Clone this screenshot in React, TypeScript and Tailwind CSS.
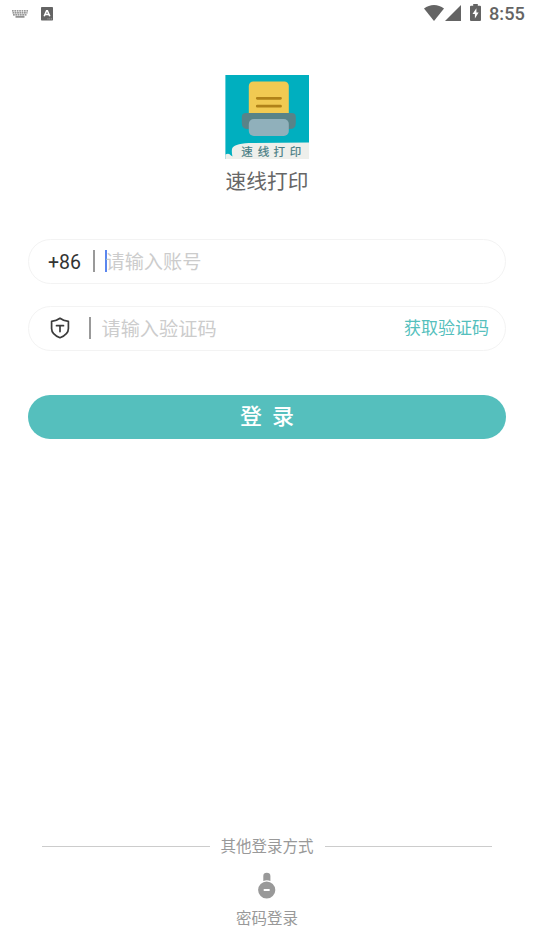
function KeyboardIcon() {
  return (
    <svg width="16" height="8" viewBox="0 0 16 8" fill="none" stroke="#777">
      <path d="M0 0.8H16" strokeWidth="1.2" strokeDasharray="1.7 0.7" />
      <path d="M0.5 2.8H15.5" strokeWidth="1.2" strokeDasharray="1.8 0.5" />
      <path d="M1 4.8H15" strokeWidth="1.2" strokeDasharray="1.8 0.5" />
      <path d="M3.5 6.9H12.5" strokeWidth="1.4" />
    </svg>
  );
}

function InputMethodIcon() {
  return (
    <svg width="12" height="14" viewBox="0 0 12 14">
      <rect width="12" height="13.5" rx="0.7" fill="#646464" />
      <path d="M3.2 9.3L5.6 3.8H6.4L8.8 9.3M4.2 7.5H7.8" fill="none" stroke="#fff" strokeWidth="1.6" />
      <path d="M6.5 11.9H11" stroke="#bbb" strokeWidth="0.8" strokeDasharray="1 0.7" />
    </svg>
  );
}

function StatusBar() {
  return (
    <header className="flex h-[27px] items-center justify-between pr-[9px] pl-3">
      <div className="flex items-center gap-[13px]">
        <KeyboardIcon />
        <InputMethodIcon />
      </div>
      <div className="flex items-center">
        <svg className="mb-px" width="20" height="16" viewBox="0 0 20 16" fill="#646464">
          <path d="M0 3.6C5.8-1.2 14.2-1.2 20 3.6L10 16Z" />
        </svg>
        <svg className="mb-px ml-px" width="16" height="16" viewBox="0 0 16 16" fill="#646464">
          <path d="M16 0V16H0Z" />
        </svg>
        <svg className="mb-[2px] ml-[9px]" width="11" height="17" viewBox="0 0 11 17">
          <path d="M3.2 0H7.8V1.7H10Q11 1.7 11 2.7V16Q11 17 10 17H1Q0 17 0 16V2.7Q0 1.7 1 1.7H3.2Z" fill="#646464" />
          <path d="M6.4 4.3L2.5 10H4.9V14.5L8.6 8.5H6.4Z" fill="#fff" />
        </svg>
        <span className="mt-px ml-2 w-9 font-['Roboto',sans-serif] text-[18.2px] leading-6 font-medium text-[#646464]">8:55</span>
      </div>
    </header>
  );
}

function Logo() {
  return (
    <svg width="84" height="84" viewBox="0 0 84 84">
      <rect x="0.4" width="83.6" height="84" fill="#00afbf" />
      <rect x="23.8" y="6.5" width="40" height="40" rx="4.5" fill="#f1ca52" />
      <path d="M32.3 23.3H55.5M32.3 31.2H55.5" stroke="#b08218" strokeWidth="2.8" strokeLinecap="round" />
      <path d="M20.8 38H66.8Q70.8 38 70.8 42V48Q70.8 54 64.8 54H22.8Q16.8 54 16.8 48V42Q16.8 38 20.8 38Z" fill="#588388" />
      <rect x="23.8" y="44" width="40" height="17" rx="5" fill="#90b0bb" />
      <path d="M0.4 79.5Q4 77.5 6 80.5L7.5 81.5Q6.5 78 7 74Q8 69 24 68L84 67.5V84H0.4Z" fill="#eeefeb" />
      <g className="font-['Noto_Sans_CJK_SC',sans-serif] text-[11.5px]" fill="#487d85" stroke="#487d85" strokeWidth="0.2">
        <text x="16.3" y="81">速</text>
        <text x="32.7" y="81">线</text>
        <text x="48.6" y="81">打</text>
        <text x="64.8" y="81">印</text>
      </g>
    </svg>
  );
}

function ShieldIcon() {
  return (
    <svg width="20" height="22" viewBox="0 0 20 22" fill="none" stroke="#3c3c3c" strokeWidth="1.7" strokeLinejoin="round" strokeLinecap="round">
      <path d="M10 1.3Q13.3 3.8 18.4 4.4V11.5Q18.4 17.5 10 20.7Q1.6 17.5 1.6 11.5V4.4Q6.7 3.8 10 1.3Z" />
      <path d="M6.5 8.7H13.5M10 8.7V14.6" />
    </svg>
  );
}

function LockIcon() {
  return (
    <svg width="18" height="27" viewBox="0 0 18 27" fill="#999">
      <path d="M5.3 8.9V4Q5.3 0.8 8.8 0.8T12.4 4V8.9Q9 7.4 5.3 8.9Z" />
      <circle cx="8.7" cy="18" r="8.6" />
      <rect x="5.7" y="17" width="6" height="2" rx="0.5" fill="#fff" />
    </svg>
  );
}

export default function App() {
  return (
    <main className="flex h-[950px] w-[534px] flex-col bg-white font-['Noto_Sans_CJK_SC',sans-serif]">
      <StatusBar />

      {/* Brand */}
      <div className="mt-12 flex flex-col items-center">
        <Logo />
        <h1 className="mt-[6px] text-[20.7px] leading-[30px] text-[#666]">速线打印</h1>
      </div>

      {/* Login form */}
      <form className="mx-7 mt-11 flex flex-col">
        <div className="flex h-[45px] items-center rounded-full border border-[#f3f3f3] pb-px pl-[19px]">
          <span className="w-[45px] pt-[3px] font-['Roboto',sans-serif] text-[19.5px] leading-none text-[#333]">+86</span>
          <div className="h-[22px] w-[1.5px] bg-[#999]" />
          <div className="ml-[10.5px] h-[22px] w-[2px] bg-[#5b86ee]" />
          <span className="-ml-[1.5px] pb-px text-[19.2px] leading-[28px] text-[#ccc]">请输入账号</span>
        </div>

        <div className="mt-[22px] flex h-[45px] items-center rounded-full border border-[#f3f3f3] pr-4 pb-px pl-[21px]">
          <ShieldIcon />
          <div className="ml-[19px] h-[22px] w-[1.5px] bg-[#999]" />
          <span className="ml-[11px] pb-px text-[19.2px] leading-[28px] text-[#ccc]">请输入验证码</span>
          <button type="button" className="ml-auto pb-[3px] text-[17px] leading-[25px] text-[#55bfbd]">获取验证码</button>
        </div>

        <button type="button" className="mt-11 flex h-[44.4px] items-center justify-center gap-[10px] rounded-full bg-[#55bfbd] pb-[7px] text-[22px] leading-8 font-medium text-white">
          <span>登</span>
          <span>录</span>
        </button>
      </form>

      {/* Other ways to sign in */}
      <footer className="mt-auto flex flex-col items-center pb-[21px]">
        <div className="flex w-[450px] items-center gap-[11px]">
          <div className="mt-[3px] h-px flex-1 bg-[#ccc]" />
          <span className="text-[15.5px] leading-6 text-[#999]">其他登录方式</span>
          <div className="mt-[3px] h-px flex-1 bg-[#ccc]" />
        </div>
        <div className="mt-[15px]">
          <LockIcon />
        </div>
        <span className="mt-[6px] text-[15.5px] leading-6 text-[#999]">密码登录</span>
      </footer>
    </main>
  );
}
